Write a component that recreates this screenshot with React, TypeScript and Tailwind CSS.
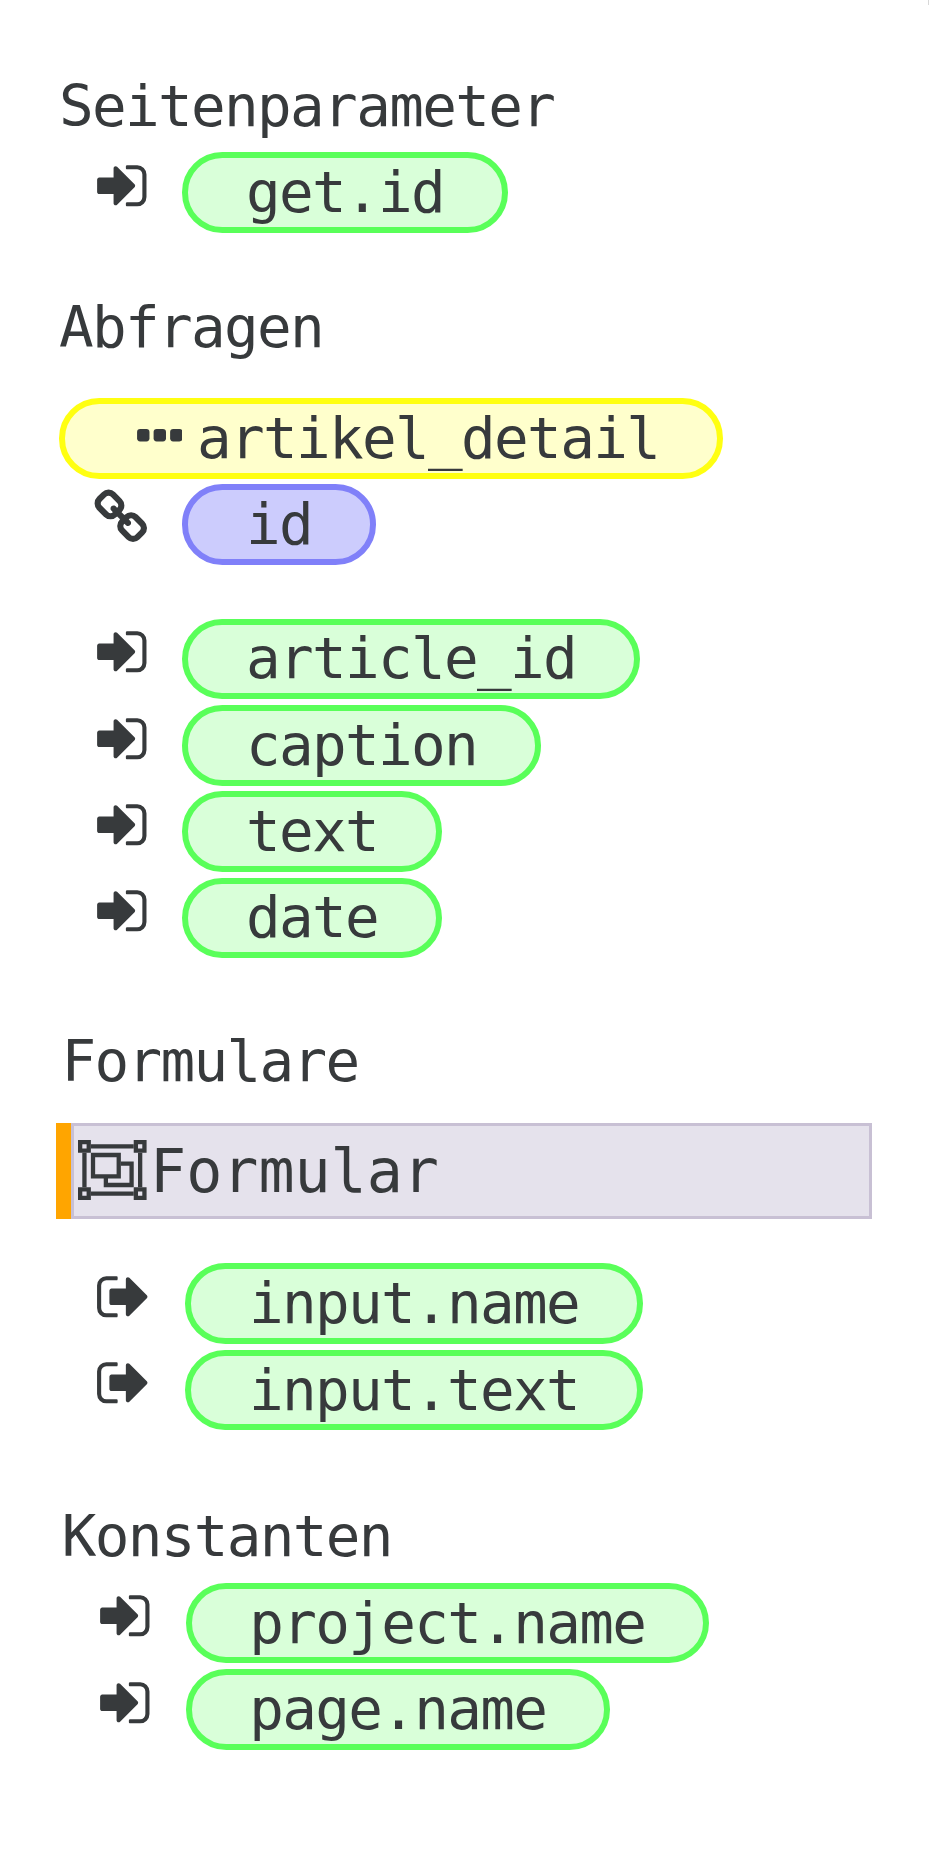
import type { ReactNode } from "react";

const SIGN_IN =
  "M1312 896q0 26-19 45l-544 544q-19 19-45 19t-45-19-19-45v-288h-448q-26 0-45-19t-19-45v-384q0-26 19-45t45-19h448v-288q0-26 19-45t45-19 45 19l544 544q19 19 19 45zm352-352v704q0 119-84.5 203.5t-203.5 84.5h-320q-13 0-22.5-9.5t-9.5-22.5q0-4-1-20t-.5-26.5 3-23.5 10-19.5 20.5-6.5h320q66 0 113-47t47-113v-704q0-66-47-113t-113-47h-312l-11.5-1-11.5-3-8-5.5-7-9-2-13.5q0-4-1-20t-.5-26.5 3-23.5 10-19.5 20.5-6.5h320q119 0 203.5 84.5t84.5 203.5z";
const SIGN_OUT =
  "M704 1440q0 4 1 20t.5 26.5-3 23.5-10 19.5-20.5 6.5h-320q-119 0-203.5-84.5t-84.5-203.5v-704q0-119 84.5-203.5t203.5-84.5h320q13 0 22.5 9.5t9.5 22.5q0 4 1 20t.5 26.5-3 23.5-10 19.5-20.5 6.5h-320q-66 0-113 47t-47 113v704q0 66 47 113t113 47h312l11.5 1 11.5 3 8 5.5 7 9 2 13.5zm928-544q0 26-19 45l-544 544q-19 19-45 19t-45-19-19-45v-288h-448q-26 0-45-19t-19-45v-384q0-26 19-45t45-19h448v-288q0-26 19-45t45-19 45 19l544 544q19 19 19 45z";
const LINK =
  "M1520 1216q0-40-28-68l-208-208q-28-28-68-28-42 0-72 32 3 3 19 18.5t21.5 21.5 15 19 13 25.5 3.5 27.5q0 40-28 68t-68 28q-15 0-27.5-3.5t-25.5-13-19-15-21.5-21.5-18.5-19q-33 31-33 73 0 40 28 68l206 207q27 27 68 27 40 0 68-26l147-146q28-28 28-67zm-703-705q0-40-28-68l-206-207q-28-28-68-28-39 0-68 27l-147 146q-28 28-28 67 0 40 28 68l208 208q27 27 68 27 42 0 72-31-3-3-19-18.5t-21.5-21.5-15-19-13-25.5-3.5-27.5q0-40 28-68t68-28q15 0 27.5 3.5t25.5 13 19 15 21.5 21.5 18.5 19q33-31 33-73zm895 705q0 120-85 203l-147 146q-83 83-203 83-121 0-204-85l-206-207q-83-83-83-203 0-123 88-209l-88-88q-86 88-208 88-120 0-204-84l-208-208q-84-84-84-204t85-203l147-146q83-83 203-83 121 0 204 85l206 207q83 83 83 203 0 123-88 209l88 88q86-88 208-88 120 0 204 84l208 208q84 84 84 204z";

const TONES = {
  green: "border-[#59ff59] bg-[#d9ffd9]",
  blue: "border-[#8080f9] bg-[#ccccfd]",
  yellow: "border-[#ffff11] bg-[#ffffcc]",
};

function Glyph({ d }: { d: string }) {
  return (
    <svg viewBox="0 0 1792 1792" className="mt-[4.7px] size-[57.6px] shrink-0" fill="currentColor">
      <path d={d} />
    </svg>
  );
}

function Pill({ tone = "green", children }: { tone?: keyof typeof TONES; children: ReactNode }) {
  return (
    <span
      className={`flex h-[80.64px] items-center whitespace-pre rounded-[40.3px] border-[6px] px-[57.6px] leading-[69px] ${TONES[tone]}`}
    >
      {children}
    </span>
  );
}

function Heading({ children }: { children: ReactNode }) {
  return <h2 className="h-[67px] leading-[67px]">{children}</h2>;
}

function EllipsisIcon() {
  return (
    <svg viewBox="0 0 1408 384" className="-mt-[5.5px] ml-[14.2px] mr-[14.6px] h-[12.4px] w-[45.6px] shrink-0" fill="currentColor">
      <rect width="384" height="384" rx="96" />
      <rect x="512" width="384" height="384" rx="96" />
      <rect x="1024" width="384" height="384" rx="96" />
    </svg>
  );
}

function ObjectGroupIcon() {
  return (
    <svg viewBox="0 0 2048 1792" className="-mt-px ml-1 h-[60px] w-[68.6px] shrink-0" fill="none" stroke="currentColor">
      <g strokeWidth="128">
        <path d="M384 192H1664M384 1600H1664M192 384V1408M1856 384V1408" />
        <path d="M64 64h256v256h-256zM1728 64h256v256h-256zM64 1472h256v256h-256zM1728 1472h256v256h-256z" />
        <path d="M448 448h768v640h-768z" />
        <path d="M1280 704h320v640h-768v-256" />
      </g>
    </svg>
  );
}

export default function App() {
  return (
    <main className="relative h-[1858px] w-[930px] overflow-hidden bg-white font-['DejaVu_Sans_Mono',monospace] text-[57.6px] tracking-[-1.66px] text-[#373a3c]">
      <span className="absolute right-[1px] top-0 h-[5px] w-px bg-[#d8d8d8]" />

      <section className="pl-[59px] pt-[73px]">
        <Heading>Seitenparameter</Heading>
        <div className="mt-3 flex pl-[34px]">
          <Glyph d={SIGN_IN} />
          <div className="ml-[31.8px] flex">
            <Pill>get.id</Pill>
          </div>
        </div>
      </section>

      <section className="pl-[59px] pt-[61.36px]">
        <Heading>Abfragen</Heading>
        <div className="mt-[37px] flex">
          <Pill tone="yellow">
            <EllipsisIcon />
            artikel_detail
          </Pill>
        </div>
        <div className="mt-[5.76px] flex pl-[33.2px]">
          <Glyph d={LINK} />
          <div className="ml-[32.6px] flex">
            <Pill tone="blue">id</Pill>
          </div>
        </div>
        <div className="mt-[53.56px] flex flex-col gap-[5.76px]">
          {["article_id", "caption", "text", "date"].map((name) => (
            <div key={name} className="flex pl-[34px]">
              <Glyph d={SIGN_IN} />
              <div className="ml-[31.8px] flex">
                <Pill>{name}</Pill>
              </div>
            </div>
          ))}
        </div>
      </section>

      <section className="pl-[56px] pt-[69.56px]">
        <div className="pl-[5.5px]">
          <Heading>Formulare</Heading>
        </div>
        <div className="mt-7 flex h-24 w-[816px] border-l-[15px] border-l-[#ffa500]">
          <div className="flex flex-1 items-center gap-[3.5px] border-[3px] border-[#c8c0d4] bg-[#e5e2ec] text-[60px] leading-[90px] tracking-[-0.02px]">
            <ObjectGroupIcon />
            <span>Formular</span>
          </div>
        </div>
        <div className="mt-[44.6px] flex flex-col gap-[5.76px]">
          {["input.name", "input.text"].map((name) => (
            <div key={name} className="flex pl-[39.2px]">
              <Glyph d={SIGN_OUT} />
              <div className="ml-[32.5px] flex">
                <Pill>{name}</Pill>
              </div>
            </div>
          ))}
        </div>
      </section>

      <section className="pl-[61.7px] pt-[72.36px]">
        <Heading>Konstanten</Heading>
        <div className="mt-[13px] flex flex-col gap-[5.76px]">
          {["project.name", "page.name"].map((name) => (
            <div key={name} className="flex pl-[34.3px]">
              <Glyph d={SIGN_IN} />
              <div className="ml-8 flex">
                <Pill>{name}</Pill>
              </div>
            </div>
          ))}
        </div>
      </section>
    </main>
  );
}
